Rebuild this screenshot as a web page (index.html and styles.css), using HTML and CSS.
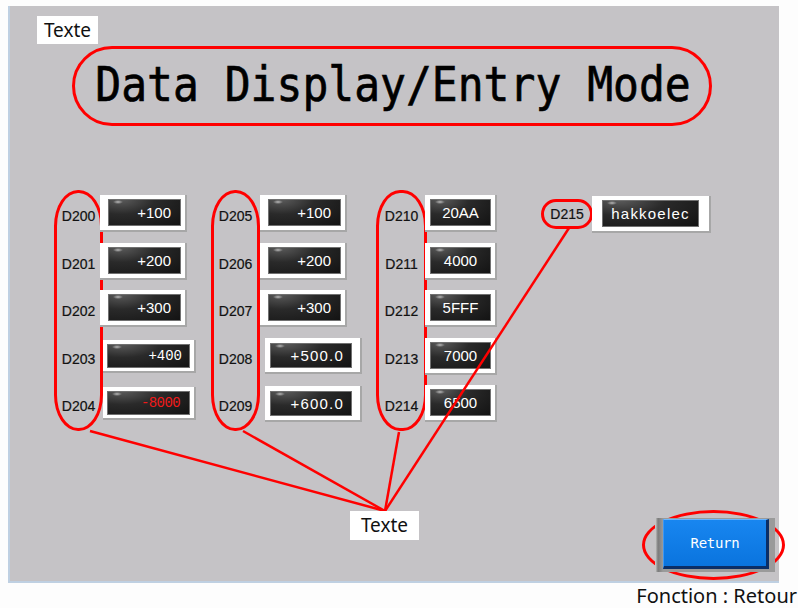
FILE: index.html
```html
<!DOCTYPE html>
<html lang="fr">
<head>
    <meta charset="UTF-8">
    <meta name="viewport" content="width=device-width, initial-scale=1.0">
    <title>Data Display/Entry Mode</title>
    <link rel="stylesheet" href="styles.css">
</head>
<body>
    <div class="screen">
        <div class="tag">Texte</div>
        <div class="title-ring"><span class="title">Data Display/Entry Mode</span></div>

        <div class="groups">
            <div class="group g1">
                <div class="ring labels">
                    <span>D200</span><span>D201</span><span>D202</span><span>D203</span><span>D204</span>
                </div>
                <div class="fields">
                    <div class="slot"><div class="field"><div class="lcd">+100</div></div></div>
                    <div class="slot"><div class="field"><div class="lcd">+200</div></div></div>
                    <div class="slot"><div class="field"><div class="lcd">+300</div></div></div>
                    <div class="slot"><div class="field short"><div class="lcd seg">+400</div></div></div>
                    <div class="slot"><div class="field short"><div class="lcd seg neg">-8000</div></div></div>
                </div>
            </div>

            <div class="group g2">
                <div class="ring labels">
                    <span>D205</span><span>D206</span><span>D207</span><span>D208</span><span>D209</span>
                </div>
                <div class="fields">
                    <div class="slot"><div class="field"><div class="lcd">+100</div></div></div>
                    <div class="slot"><div class="field"><div class="lcd">+200</div></div></div>
                    <div class="slot"><div class="field"><div class="lcd">+300</div></div></div>
                    <div class="slot"><div class="field wide"><div class="lcd spaced">+500.0</div></div></div>
                    <div class="slot"><div class="field wide"><div class="lcd spaced">+600.0</div></div></div>
                </div>
            </div>

            <div class="group g3">
                <div class="ring labels">
                    <span>D210</span><span>D211</span><span>D212</span><span>D213</span><span>D214</span>
                </div>
                <div class="fields">
                    <div class="slot"><div class="field hex"><div class="lcd">20AA</div></div></div>
                    <div class="slot"><div class="field hex"><div class="lcd">4000</div></div></div>
                    <div class="slot"><div class="field hex"><div class="lcd">5FFF</div></div></div>
                    <div class="slot"><div class="field hex"><div class="lcd">7000</div></div></div>
                    <div class="slot"><div class="field hex"><div class="lcd">6500</div></div></div>
                </div>
            </div>

            <div class="group g4">
                <div class="ring single">D215</div>
                <div class="field text"><div class="lcd spaced">hakkoelec</div></div>
            </div>
        </div>

        <div class="bottom">
            <div class="btn-ring">
                <div class="btn-frame"><button class="btn">Return</button></div>
            </div>
        </div>
    </div>

    <div class="caption">Fonction : Retour</div>

    <!-- leader lines from the callout label to the label columns -->
    <svg class="leaders" width="798" height="608" viewBox="0 0 798 608">
        <line x1="90" y1="431" x2="385" y2="511"/>
        <line x1="243" y1="431" x2="385" y2="511"/>
        <line x1="399" y1="432" x2="385" y2="511"/>
        <line x1="569" y1="228" x2="385" y2="511"/>
    </svg>
    <div class="callout">Texte</div>
</body>
</html>
```

FILE: styles.css
```css
body {
    margin: 0;
    background: #fdfdfd;
    font-family: "Liberation Sans", Arial, sans-serif;
    position: relative;
    width: 798px;
    height: 608px;
    overflow: hidden;
}

.screen {
    position: relative;
    margin: 6px 0 0 8px;
    width: 771px;
    height: 577px;
    box-sizing: border-box;
    background: #c5c3c6;
    border-left: 2px solid #bfd0e2;
    border-bottom: 2px solid #bfd0e2;
    display: flex;
    flex-direction: column;
}

.tag {
    margin: 10px 0 0 27px;
    width: 61px;
    height: 28px;
    background: #fff;
    font: 19px "Noto Sans", sans-serif;
    line-height: 28px;
    text-align: center;
    color: #111;
}

.title-ring {
    margin: 2px 0 0 62px;
    width: 640px;
    height: 80px;
    box-sizing: border-box;
    border: 3px solid #f00;
    border-radius: 40px;
    display: flex;
    align-items: center;
    justify-content: center;
}
.title {
    display: inline-block;
    font: 43px "DejaVu Sans Mono", monospace;
    color: #000;
    transform: scaleY(1.12);
    -webkit-text-stroke: 0.6px #000;
    margin-top: -4px;
    margin-left: 2px;
}

/* field groups */
.groups {
    display: flex;
    align-items: flex-start;
    margin: 64px 0 0 44px;
}
.group { display: flex; align-items: flex-start; }
.g1 { width: 157px; }
.g2 { width: 165px; }
.g3 { width: 165px; }
.g4 { align-items: center; height: 48px; }

.ring {
    border: 3px solid #f00;
    box-sizing: border-box;
    font-size: 14px;
    color: #111;
    -webkit-text-stroke: 0.2px #111;
}
.labels {
    width: 49px;
    height: 241px;
    border-radius: 24px / 36px;
    display: flex;
    flex-direction: column;
}
.g3 .labels { width: 51px; }
.labels span {
    height: 47.5px;
    line-height: 47.5px;
    text-align: center;
}
.single {
    width: 52px;
    height: 30px;
    line-height: 24px;
    text-align: center;
    border-radius: 15px;
    margin-right: -1px;
}

.fields {
    display: flex;
    flex-direction: column;
    margin: 0 0 0 -3px;
}
.g2 .fields { margin-left: 0; }
.g3 .fields { margin-left: -2px; }
.slot {
    height: 47.5px;
    display: flex;
    align-items: center;
}

.field {
    width: 87px;
    height: 37px;
    box-sizing: border-box;
    background: #fff;
    border-right: 2px solid #a7a7a7;
    border-bottom: 2px solid #a7a7a7;
    padding: 4px 4px 4px 8px;
}
.field.short { width: 93px; height: 33px; margin-left: 3px; padding: 4px 4px 3px 4px; }
.field.wide { width: 97px; height: 36px; margin-left: 5px; padding: 5px 8px 4px 5px; }
.field.hex { width: 72px; padding: 4px 4px 4px 5px; }
.field.text { width: 119px; padding: 4px 10px 4px 10px; }

.lcd {
    height: 100%;
    box-sizing: border-box;
    background:
        radial-gradient(ellipse 5px 2px at 10px 3px, rgba(255, 255, 255, 0.6), transparent),
        radial-gradient(ellipse at 18% 0%, #5c5c5c 0%, #2a2a2a 40%, #121212 100%);
    box-shadow: inset 0 0 0 1px #707070;
    color: #fff;
    font-size: 15px;
    display: flex;
    align-items: center;
    justify-content: flex-end;
    padding-right: 10px;
}
.lcd.seg { font: 14px "Liberation Mono", monospace; padding-right: 8px; }
.lcd.neg { color: #f01a1a; font-size: 14px; padding-right: 10px; letter-spacing: -0.6px; }
.lcd.spaced { letter-spacing: 1.2px; padding-right: 8px; }
.field.hex .lcd, .field.text .lcd { justify-content: center; padding-right: 0; }

/* return button */
.bottom {
    margin-top: auto;
    margin-bottom: 1px;
    display: flex;
    justify-content: flex-end;
}
.btn-ring {
    width: 143px;
    height: 70px;
    box-sizing: border-box;
    border: 3px solid #f00;
    border-radius: 50%;
    margin-right: -6px;
    display: flex;
    align-items: center;
    justify-content: center;
    padding-left: 3px;
}
.btn-frame {
    width: 120px;
    height: 54px;
    box-sizing: border-box;
    background: linear-gradient(to right, #d2d2d2 0, #7b7b7b 3px, #9a9a9a 8px, #9a9a9a 100%);
    padding: 1px 6px 3px 8px;
}
.btn {
    width: 100%;
    height: 100%;
    box-sizing: border-box;
    background: linear-gradient(#1886f0, #0a74de);
    border-top: 1px solid #6bb5ff;
    border-left: 1px solid #3d97f2;
    border-right: 3px solid #0b2e66;
    border-bottom: 3px solid #0b2e66;
    color: #fff;
    font: 14px "DejaVu Sans Mono", monospace;
    letter-spacing: -0.3px;
    padding: 0;
}

.caption {
    text-align: right;
    padding-right: 1px;
    font: 20px "Noto Sans", sans-serif;
    line-height: 26px;
    color: #111;
}

.leaders {
    position: absolute;
    left: 0;
    top: 0;
    pointer-events: none;
}
.leaders line { stroke: #f00; stroke-width: 2.5; }

.callout {
    position: absolute;
    left: 350px;
    top: 511px;
    width: 69px;
    height: 29px;
    background: #fff;
    font: 19px "Noto Sans", sans-serif;
    line-height: 29px;
    text-align: center;
    color: #111;
}
```
